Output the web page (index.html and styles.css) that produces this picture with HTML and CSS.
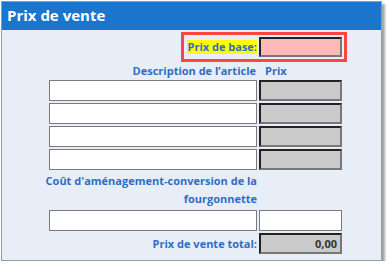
FILE: index.html
```html
<!DOCTYPE html>
<html>
<head>
    <title>Prix de vente</title>
    <link rel="stylesheet" href="styles.css">
</head>
<body>

    <div class="panel">
        <div class="header">Prix de vente</div>
        <div class="form">
            <div class="base-box">
                <span class="base-label">Prix de base:</span>
                <input class="price locked pink" type="text">
            </div>

            <div class="col-title desc-title">Description de l’article</div>
            <div class="col-title price-title">Prix</div>

            <input class="desc" type="text">
            <input class="price locked" type="text" readonly>
            <input class="desc" type="text">
            <input class="price locked" type="text" readonly>
            <input class="desc" type="text">
            <input class="price locked" type="text" readonly>
            <input class="desc" type="text">
            <input class="price locked" type="text" readonly>

            <div class="label cost-label">Coût d'aménagement-conversion de la fourgonnette</div>
            <div></div>

            <input class="desc" type="text">
            <input class="price" type="text">

            <div class="label total-label">Prix de vente total:</div>
            <input class="price locked total" type="text" value="0,00" readonly>
        </div>
    </div>

</body>
</html>
```

FILE: styles.css
```css
body {
    margin: 0;
    font-family: "Open Sans", "Noto Sans", sans-serif;
}
.panel {
    margin: 1px 0 0 1px;
    width: 381px;
    box-sizing: border-box;
    border: 1px solid #9a9a9a;
    background-color: #e8eef7;
    box-shadow: 3px 3px 2px rgba(0, 0, 0, 0.35);
}
.header {
    height: 28px;
    line-height: 26px;
    padding-left: 5px;
    background-color: #1b75cd;
    color: #fff;
    font-size: 15px;
    font-weight: bold;
}
.form {
    display: grid;
    grid-template-columns: 208px 83px;
    column-gap: 2px;
    row-gap: 2px;
    padding: 2px 39px 6px 47px;
}
.base-box {
    grid-column: 1 / 3;
    justify-self: end;
    margin-right: -5px;
    display: flex;
    align-items: center;
    gap: 2px;
    padding: 2px 2px 2px 3px;
    border: 3px solid #ff4444;
}
.base-label {
    background-color: #ffff00;
    color: #2e6dc6;
    font-size: 11px;
    font-weight: bold;
    line-height: 14px;
}
.col-title {
    color: #2e6dc6;
    font-size: 11px;
    font-weight: bold;
    line-height: 14px;
}
.desc-title {
    text-align: right;
    padding-right: 1px;
}
.price-title {
    padding-left: 6px;
}
input {
    box-sizing: border-box;
    height: 21px;
    margin: 0;
    padding: 0 4px;
    font-family: inherit;
    font-size: 11px;
    font-weight: bold;
    color: #333;
    background-color: #fff;
    border: 1px solid #7a7a7a;
    outline: none;
}
.desc {
    width: 208px;
}
.price {
    width: 83px;
}
.locked {
    background-color: #cacaca;
    border: 2px solid #777;
    border-top-color: #222;
    border-left-color: #222;
}
.locked.pink {
    height: 20px;
    background-color: #ffb9b9;
}
.total {
    text-align: right;
    padding-right: 3px;
}
.label {
    color: #2e6dc6;
    font-size: 11px;
    font-weight: bold;
    text-align: right;
}
.cost-label {
    margin-left: -8px;
    line-height: 18px;
}
.total-label {
    align-self: center;
    line-height: 14px;
}
```
